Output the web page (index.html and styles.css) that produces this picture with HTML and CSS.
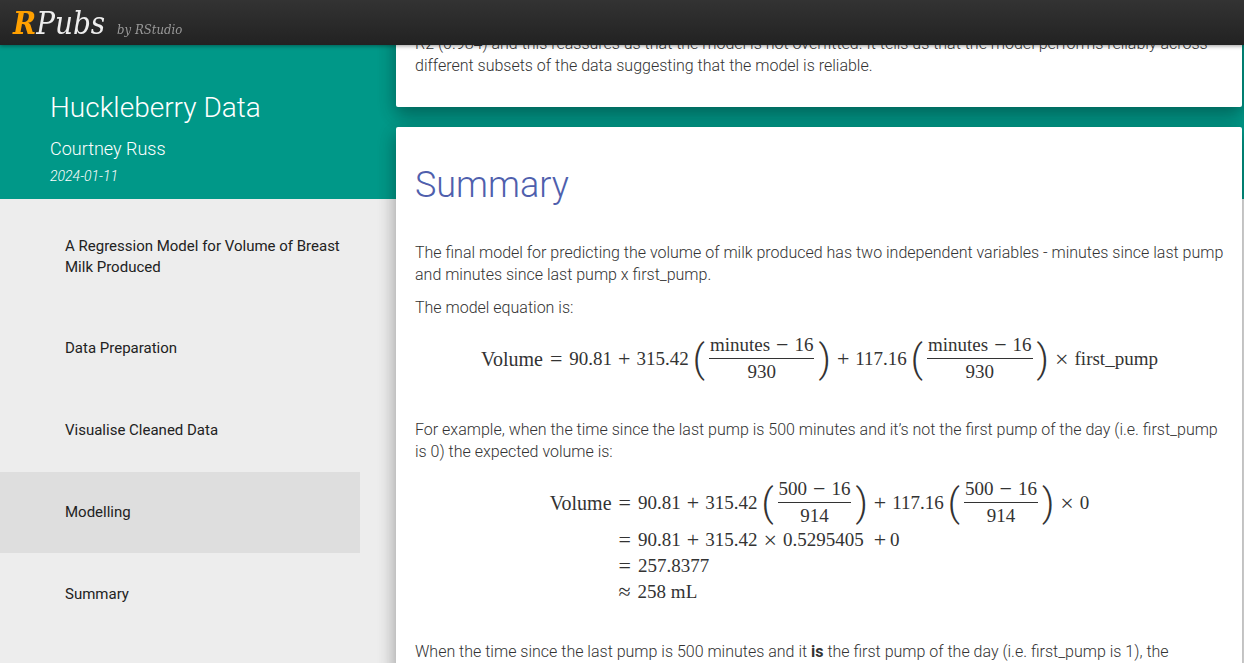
FILE: index.html
```html
<!DOCTYPE html>
<html lang="en">
<head>
<meta charset="utf-8">
<meta name="viewport" content="width=device-width, initial-scale=1">
<title>RPubs - Huckleberry Data</title>
<link rel="stylesheet" href="styles.css">
</head>
<body>
<header class="pagebar">
  <a class="brand" href="#"><span class="brand-r">R</span>Pubs</a>
  <a class="brandby" href="#">by RStudio</a>
</header>
<div class="layout">
  <aside class="sidebar">
    <div class="doc-head">
      <h1 class="doc-title">Huckleberry Data</h1>
      <p class="doc-author">Courtney Russ</p>
      <p class="doc-date">2024-01-11</p>
    </div>
    <nav class="toc" aria-label="Sections">
      <a class="toc-link" href="#regression">A Regression Model for Volume of Breast Milk Produced</a>
      <a class="toc-link" href="#preparation">Data Preparation</a>
      <a class="toc-link" href="#visualise">Visualise Cleaned Data</a>
      <a class="toc-link toc-active" href="#modelling">Modelling</a>
      <a class="toc-link" href="#summary">Summary</a>
    </nav>
  </aside>
  <main class="content">
    <section class="card card-modelling" id="modelling">
      <p>R2 (0.984) and this reassures us that the model is not overfitted. It tells us that the model performs reliably across different subsets of the data suggesting that the model is reliable.</p>
    </section>
    <section class="card card-summary" id="summary">
      <h2 class="card-title">Summary</h2>
      <p>The final model for predicting the volume of milk produced has two independent variables - minutes since last pump and minutes since last pump x first_pump.</p>
      <p>The model equation is:</p>
      <div class="equation">
        <div class="row">
          <span class="word">Volume</span><span class="rel">=</span><span>90.81</span><span class="op">+</span><span>315.42</span>
          <span class="group"><span class="paren">(</span><span class="frac"><span class="numer">minutes<span class="op">−</span>16</span><span class="denom">930</span></span><span class="paren close">)</span></span>
          <span class="op">+</span><span>117.16</span>
          <span class="group"><span class="paren">(</span><span class="frac"><span class="numer">minutes<span class="op">−</span>16</span><span class="denom">930</span></span><span class="paren close">)</span></span>
          <span class="op times">×</span><span>first_pump</span>
        </div>
      </div>
      <p>For example, when the time since the last pump is 500 minutes and it’s not the first pump of the day (i.e. first_pump is 0) the expected volume is:</p>
      <div class="equation">
        <div class="aligned">
          <span class="word">Volume</span>
          <div class="row">
            <span class="rel">=</span><span>90.81</span><span class="op">+</span><span>315.42</span>
            <span class="group"><span class="paren">(</span><span class="frac"><span class="numer">500<span class="op">−</span>16</span><span class="denom">914</span></span><span class="paren close">)</span></span>
            <span class="op">+</span><span>117.16</span>
            <span class="group"><span class="paren">(</span><span class="frac"><span class="numer">500<span class="op">−</span>16</span><span class="denom">914</span></span><span class="paren close">)</span></span>
            <span class="op times">×</span><span>0</span>
          </div>
          <div class="row second"><span class="rel">=</span><span>90.81</span><span class="op">+</span><span>315.42</span><span class="op times">×</span><span>0.5295405</span><span class="op wide">+</span><span>0</span></div>
          <div class="row second"><span class="rel">=</span><span>257.8377</span></div>
          <div class="row second"><span class="rel">≈</span><span>258 mL</span></div>
        </div>
      </div>
      <p>When the time since the last pump is 500 minutes and it <strong>is</strong> the first pump of the day (i.e. first_pump is 1), the</p>
    </section>
  </main>
</div>
</body>
</html>
```
FILE: styles.css
```css
* { box-sizing: border-box; }

body {
  margin: 0;
  height: 100vh;
  overflow: hidden;
  background: linear-gradient(#009888 199px, #ededed 199px);
  color: #333;
  font: 300 16px/22px Roboto, sans-serif;
}

a { color: inherit; text-decoration: none; }
strong { font-weight: 700; }

.pagebar {
  position: fixed;
  inset: 0 0 auto;
  z-index: 2;
  height: 45px;
  padding-left: 13px;
  display: flex;
  align-items: baseline;
  gap: 12px;
  background: linear-gradient(#333, #222);
  box-shadow: 0 1px 4px rgba(0, 0, 0, 0.4);
  font-family: "DejaVu Serif Condensed", "DejaVu Serif", serif;
  font-style: italic;
}

.brand { color: #eee; font-size: 31px; line-height: 46px; }
.brand-r { color: #ffa000; font-weight: 700; }
.brandby { color: #999; font-size: 13px; }

.layout { display: flex; min-height: 100vh; }

.sidebar { flex: 0 0 396px; padding-top: 45px; }

.doc-head { height: 154px; padding: 45px 50px 0; color: #fff; }
.doc-title { margin: 0; font-size: 28px; font-weight: 300; line-height: 36px; }
.doc-author { margin: 11px 0 0; font-size: 18px; line-height: 24px; }
.doc-date { margin: 4px 0 0; font-size: 14px; line-height: 22px; font-style: italic; }

.toc { width: 360px; display: flex; flex-direction: column; gap: 1px; }
.toc-link {
  padding: 30px 0 30px 65px;
  color: #222;
  font-size: 15px;
  font-weight: 400;
  line-height: 21px;
}
.toc-link:first-child { padding: 37px 16px 29px 65px; }
.toc-active { background: #dedede; }

.content {
  flex: 1;
  margin-right: 2px;
  display: flex;
  flex-direction: column;
  gap: 20px;
}

.card {
  padding: 33px 18px 20px 19px;
  background: #fff;
  border-radius: 2px;
  box-shadow: 0 8px 17px rgba(0, 0, 0, 0.2), 0 6px 20px rgba(0, 0, 0, 0.19);
}
.card p { margin: 0 0 10px; }
.card-summary { flex: 1; padding-bottom: 0; }
.card-summary p { margin-bottom: 11px; }
.card-title {
  margin: 0 0 32px;
  color: #4f5fad;
  font-size: 36px;
  font-weight: 300;
  line-height: 50px;
}

.equation {
  display: flex;
  justify-content: center;
  margin: 15px 0 36px;
  font: 19px/26px "Liberation Serif", serif;
}
.row, .group, .numer { display: flex; align-items: center; }
.word { font-size: 20px; }
.op { margin: 0 6px; font-size: 22px; }
.times { font-size: 24px; }
.rel { margin: 0 7px; font-size: 22px; }
.wide { margin: 0 4px 0 10px; }
.paren { margin: 0 4px; font: 300 38px/36px Roboto, sans-serif; }
.close { margin-right: 0; }
.frac { display: flex; flex-direction: column; margin: -2px 0; text-align: center; }
.numer { padding: 0 1px; }
.denom { border-top: 1px solid #333; }
.aligned { display: grid; grid-template-columns: auto auto; align-items: center; }
.second { grid-column: 2; }
```
